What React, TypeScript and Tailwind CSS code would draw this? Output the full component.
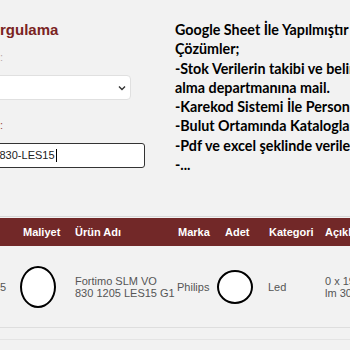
import React from "react";

const Circle = ({ w, h }: { w: number; h: number }) => (
  <div
    className="rounded-[50%] border-2 border-black bg-white"
    style={{ width: w, height: h }}
  />
);

export default function App() {
  const lines = [
    "Google Sheet İle Yapılmıştır",
    "Çözümler;",
    "-Stok Verilerin takibi ve belirli",
    "alma departmanına mail.",
    "-Karekod Sistemi İle Personel",
    "-Bulut Ortamında Katalogların",
    "-Pdf ve excel şeklinde verilerin",
    "-...",
  ];
  return (
    <div className="w-[350px] h-[350px] overflow-hidden bg-[#f2f2f2] font-['Liberation_Sans',Arial,sans-serif]">
      <div className="flex h-[216px]">
        <div className="w-[175px] shrink-0 pt-[20px]">
          <div className="h-[20px] leading-[20px] text-[15px] font-bold text-[#7a2323] whitespace-nowrap">
            rgulama
          </div>
          <div className="mt-[10px] h-[14px] leading-[14px] text-[11px] text-[#b9a9a9]">:</div>
          <div className="mt-[11px] -ml-[20px] w-[151px] h-[25px] bg-white border border-[#e0e0e0] rounded-[4px] flex items-center justify-end pr-[4px]">
            <svg width="8" height="6" viewBox="0 0 8 6">
              <path d="M1 1.5 L4 4.5 L7 1.5" fill="none" stroke="#333" strokeWidth="1.4" />
            </svg>
          </div>
          <div className="mt-[18px] h-[14px] leading-[14px] text-[11px] text-[#9a4a3a]">:</div>
          <div className="mt-[11px] -ml-[20px] w-[165px] h-[25px] bg-white border-[1.5px] border-[#333] rounded-[3px] flex items-center pl-[18.5px] text-[11px] text-[#222] whitespace-nowrap">
            <span>830-LES15</span>
            <span className="ml-[1px] w-[1px] h-[13px] bg-black" />
          </div>
        </div>
        <div className="pt-[20px] font-['Lato',sans-serif] font-bold text-[14.3px] leading-[19.3px] text-black whitespace-nowrap">
          {lines.map((l, i) => (
            <div key={i}>{l}</div>
          ))}
        </div>
      </div>
      <div className="border-t border-[#d8d8d8] mt-0">
        <div className="flex h-[28px] items-center bg-[#722828] text-white font-bold text-[11px] whitespace-nowrap mt-[1px]">
          <div className="w-[15px] shrink-0" />
          <div className="w-[53px] shrink-0 pl-[8px]">Maliyet</div>
          <div className="w-[102px] shrink-0 pl-[7px]">Ürün Adı</div>
          <div className="w-[44px] shrink-0 pl-[8px]">Marka</div>
          <div className="w-[46px] shrink-0 pl-[11px]">Adet</div>
          <div className="w-[58px] shrink-0 pl-[9px]">Kategori</div>
          <div className="shrink-0 pl-[7px]">Açıklama</div>
        </div>
        <div className="flex h-[82px] items-center border-b border-[#dedede] text-[11px] leading-[12px] text-[#555] whitespace-nowrap">
          <div className="w-[15px] shrink-0">5</div>
          <div className="w-[53px] shrink-0 pl-[5px]">
            <Circle w={36} h={42} />
          </div>
          <div className="w-[102px] shrink-0 pl-[7px]">
            <div>Fortimo SLM VO</div>
            <div>830 1205 LES15 G1</div>
          </div>
          <div className="w-[44px] shrink-0 pl-[7px]">Philips</div>
          <div className="w-[46px] shrink-0 pl-[3px]">
            <Circle w={36} h={34} />
          </div>
          <div className="w-[58px] shrink-0 pl-[8px]">Led</div>
          <div className="shrink-0 pl-[7px]">
            <div>0 x 19 W</div>
            <div>lm 3000</div>
          </div>
        </div>
        <div className="h-[12px] border-b border-[#e4e4e4]" />
      </div>
    </div>
  );
}
